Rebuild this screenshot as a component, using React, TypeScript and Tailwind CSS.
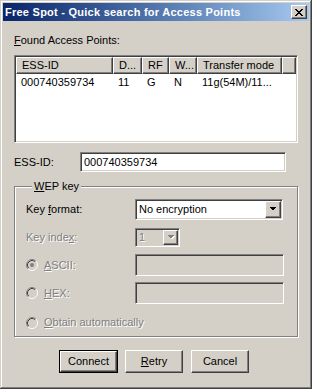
import React from 'react';

// クラシック Windows 風の枠線
const sunken =
  'border border-t-[#808080] border-l-[#808080] border-b-white border-r-white shadow-[inset_1px_1px_0_#404040,inset_-1px_-1px_0_#d4d0c8]';
const raised =
  'border border-t-white border-l-white border-b-[#404040] border-r-[#404040] shadow-[inset_-1px_-1px_0_#808080,inset_1px_1px_0_#d4d0c8]';
const disabledText = 'text-[#808080] [text-shadow:1px_1px_0_#fff]';

const closeGlyph = [
  '11000011',
  '01100110',
  '00111100',
  '00011000',
  '00111100',
  '01100110',
  '11000011',
];

function CloseButton() {
  return (
    <div className={`w-[16px] h-[14px] bg-[#d4d0c8] flex items-center justify-center ${raised}`}>
      <svg width="8" height="7" viewBox="0 0 8 7" shapeRendering="crispEdges">
        {closeGlyph.map((row, y) =>
          row.split('').map((c, x) => (c === '1' ? <rect key={`${x}-${y}`} x={x} y={y} width="1" height="1" fill="#000" /> : null))
        )}
      </svg>
    </div>
  );
}

function Arrow({ disabled }: { disabled?: boolean }) {
  return (
    <svg width="8" height="5" viewBox="0 0 8 5" shapeRendering="crispEdges">
      {disabled && <polygon points="1,1 8,1 4.5,4.5" fill="#fff" />}
      <polygon points="0,0 7,0 3.5,3.5" fill={disabled ? '#808080' : '#000'} />
    </svg>
  );
}

function Radio({ checked }: { checked?: boolean }) {
  return (
    <svg width="12" height="12" viewBox="0 0 12 12">
      <circle cx="6" cy="6" r="5" fill="#d4d0c8" />
      <path d="M2.11 9.89 A5.5 5.5 0 0 1 9.89 2.11" stroke="#808080" fill="none" />
      <path d="M9.89 2.11 A5.5 5.5 0 0 1 2.11 9.89" stroke="#fff" fill="none" />
      <path d="M2.82 9.18 A4.5 4.5 0 0 1 9.18 2.82" stroke="#404040" fill="none" />
      <path d="M9.18 2.82 A4.5 4.5 0 0 1 2.82 9.18" stroke="#d4d0c8" fill="none" />
      {checked && <circle cx="6" cy="6" r="2" fill="#808080" />}
    </svg>
  );
}

const columns = [
  { label: 'ESS-ID', w: 'w-[97px]' },
  { label: 'D...', w: 'w-[29px]' },
  { label: 'RF', w: 'w-[27px]' },
  { label: 'W...', w: 'w-[28px]' },
  { label: 'Transfer mode', w: 'w-[85px]' },
];

const row = ['000740359734', '11', 'G', 'N', '11g(54M)/11...'];

export default function App() {
  return (
    <div className="w-[312px] h-[389px] bg-[#d4d0c8] p-[3px] flex flex-col text-[11px] leading-[13px] text-black font-['Liberation_Sans',Arial,sans-serif] shadow-[inset_-1px_-1px_0_#404040,inset_1px_1px_0_#d4d0c8,inset_-2px_-2px_0_#808080,inset_2px_2px_0_#fff]">
      {/* タイトルバー */}
      <div className="h-[18px] flex items-center justify-between pl-[2px] pr-[2px] bg-linear-to-r from-[#0a246a] to-[#a6caf0]">
        <span className="text-white font-bold tracking-[0.25px]">Free Spot - Quick search for Access Points</span>
        <CloseButton />
      </div>

      <div className="px-[11px] flex flex-col">
        <div className="mt-[13px] h-[13px]">
          <u>F</u>ound Access Points:
        </div>

        {/* リストビュー */}
        <div className={`mt-[8px] h-[88px] bg-white ${sunken} p-[1px]`}>
          <div className="flex h-[17px]">
            {columns.map((c) => (
              <div key={c.label} className={`${c.w} shrink-0 bg-[#d4d0c8] ${raised} pl-[5px] flex items-center`}>
                {c.label}
              </div>
            ))}
            <div className={`flex-1 bg-[#d4d0c8] ${raised}`} />
          </div>
          <div className="flex h-[16px] items-center">
            {row.map((v, i) => (
              <div key={i} className={`${columns[i].w} shrink-0 pl-[5px] whitespace-nowrap overflow-hidden`}>
                {v}
              </div>
            ))}
          </div>
        </div>

        {/* ESS-ID */}
        <div className="mt-[9px] h-[20px] flex items-center">
          <span className="w-[66px] shrink-0">ESS-ID:</span>
          <div className={`w-[206px] h-[20px] bg-white ${sunken} flex items-center pl-[3px]`}>000740359734</div>
        </div>

        {/* WEP key グループ */}
        <fieldset className="mt-[8px] h-[157px] border border-[#808080] shadow-[1px_1px_0_#fff,inset_1px_1px_0_#fff] px-[11px] pb-0 pt-0 m-0 flex flex-col">
          <legend className="px-[2px] ml-[6px] bg-[#d4d0c8] h-[13px]">
            <u>W</u>EP key
          </legend>
          <div className="mt-[6px] h-[21px] flex items-center">
            <span className="w-[109px] shrink-0">
              Key <u>f</u>ormat:
            </span>
            <div className={`w-[148px] h-[21px] bg-white ${sunken} flex items-center justify-between pl-[3px] pr-[1px]`}>
              <span>No encryption</span>
              <div className={`w-[16px] h-[17px] bg-[#d4d0c8] ${raised} flex items-center justify-center`}>
                <Arrow />
              </div>
            </div>
          </div>

          <div className="mt-[8px] h-[19px] flex items-center">
            <span className={`w-[109px] shrink-0 ${disabledText}`}>
              Key inde<u>x</u>:
            </span>
            <div className={`w-[45px] h-[19px] bg-[#d4d0c8] ${sunken} flex items-center justify-between pl-[3px] pr-[1px]`}>
              <span className={disabledText}>1</span>
              <div className={`w-[15px] h-[15px] bg-[#d4d0c8] ${raised} flex items-center justify-center`}>
                <Arrow disabled />
              </div>
            </div>
          </div>

          <div className="mt-[7px] h-[22px] flex items-center">
            <div className="w-[109px] shrink-0 flex items-center gap-[6px]">
              <Radio checked />
              <span className={disabledText}>
                <u>A</u>SCII:
              </span>
            </div>
            <div className={`w-[149px] h-[22px] ${sunken}`} />
          </div>

          <div className="mt-[6px] h-[22px] flex items-center">
            <div className="w-[109px] shrink-0 flex items-center gap-[6px]">
              <Radio />
              <span className={disabledText}>
                <u>H</u>EX:
              </span>
            </div>
            <div className={`w-[149px] h-[22px] ${sunken}`} />
          </div>

          <div className="mt-[12px] h-[13px] flex items-center gap-[6px]">
            <Radio />
            <span className={disabledText}>
              <u>O</u>btain automatically
            </span>
          </div>
        </fieldset>

        {/* ボタン */}
        <div className="mt-[13px] flex gap-[7px] pl-[45px]">
          <div className="w-[59px] h-[23px] border border-black">
            <div className={`w-full h-full bg-[#d4d0c8] ${raised} flex items-center justify-center`}>Connect</div>
          </div>
          <div className={`w-[58px] h-[23px] bg-[#d4d0c8] ${raised} flex items-center justify-center`}>
            <span>
              <u>R</u>etry
            </span>
          </div>
          <div className={`w-[58px] h-[23px] bg-[#d4d0c8] ${raised} flex items-center justify-center ml-[1px]`}>Cancel</div>
        </div>
      </div>
    </div>
  );
}
